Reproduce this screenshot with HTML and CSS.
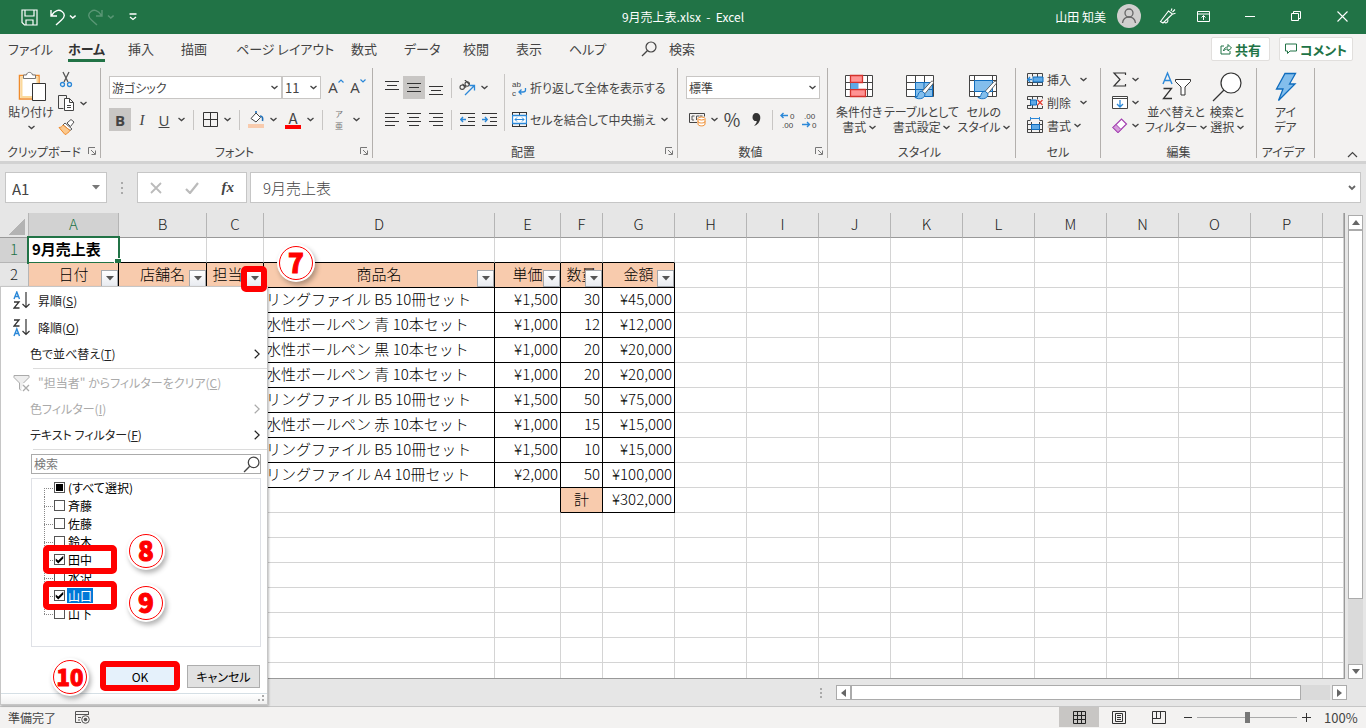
FILE: index.html
```html
<!DOCTYPE html>
<html lang="ja">
<head>
  <meta charset="UTF-8" />
  <meta name="viewport" content="width=device-width, initial-scale=1.0"/>
  <title>9月売上表.xlsx - Excel</title>
  <link rel="stylesheet" href="styles.css">
</head>
<body>

  <!-- shared icons -->
  <svg class="defs" width="0" height="0">
    <symbol id="chev" viewBox="0 0 7 5"><path d="M.5 1l3 2.600 3-2.600" fill="none" stroke="#444" stroke-width="1.300"/></symbol>
    <symbol id="next" viewBox="0 0 6 10"><path d="M.7.7L5.200 5 .7 9.300" fill="none" stroke="currentColor" stroke-width="1.200"/></symbol>
    <symbol id="launch" viewBox="0 0 8 8"><path d="M.5 7V.5H7M3 3l4 4M7.500 3.500v4h-4" fill="none" stroke="#777"/></symbol>
    <symbol id="lens" viewBox="0 0 16 16"><circle cx="10" cy="6" r="5" fill="none" stroke="currentColor" stroke-width="1.200"/><path d="M6.300 9.700L1 15" stroke="currentColor" stroke-width="1.300"/></symbol>
    <symbol id="brush" viewBox="0 0 24 24"><path d="M21.500 2.500c1.200.6 1 1.800.2 2.800L13 16l-3-2.600L19.500 3c.7-.7 1.300-.8 2-.5z" fill="#fff" stroke="#555"/><path d="M2 20c3 .3 3-1.500 3.700-3.600C6.500 14 8.500 13 10 13.400l3 2.600c.3 2-.6 4-3 5-2.600 1-6 .6-8-1z" fill="#83beec" stroke="#0f6cbd"/></symbol>
  </svg>

  <header class="titlebar">
    <div class="quick">
      <button aria-label="上書き保存"><svg width="17" height="17" viewBox="0 0 17 17"><path d="M1 1h15v15H3.500L1 13.500zM4 1v6h9V1M5 16v-5h7v5" fill="none" stroke="#fff" stroke-width="1.200"/></svg></button>
      <button aria-label="元に戻す"><svg width="26" height="17" viewBox="0 0 26 17"><path d="M1 1v6h6M1.500 6.500C5 1 9 .3 12 2.500c3.500 2.600 2.600 6-.5 8.500L6 16" fill="none" stroke="#fff" stroke-width="1.400"/><path d="M20 6.500l2.800 2.500 2.800-2.500" fill="none" stroke="#fff" stroke-width="1.500"/></svg></button>
      <button class="dim" aria-label="やり直し"><svg width="26" height="17" viewBox="0 0 26 17"><path d="M14 1v6H8M13.500 6.500C10 1 6 .3 3 2.500-.5 5 .4 8.500 3.500 11L9 16" fill="none" stroke="#fff" stroke-width="1.400"/><path d="M20 6.500l2.800 2.500 2.800-2.500" fill="none" stroke="#fff" stroke-width="1.500"/></svg></button>
      <button aria-label="カスタマイズ"><svg width="8" height="8" viewBox="0 0 8 8"><path d="M.5 1h7M1 4l3 2.500L7 4" fill="none" stroke="#fff" stroke-width="1.300"/></svg></button>
    </div>
    <div class="doc-title">9月売上表.xlsx&nbsp; -&nbsp; Excel</div>
    <div class="account">
      <span class="user">山田 知美</span>
      <svg width="24" height="24" viewBox="0 0 24 24"><circle cx="12" cy="12" r="12" fill="#d0cfce"/><circle cx="12" cy="9" r="4" fill="none" stroke="#666" stroke-width="1.300"/><path d="M5.500 19c.6-4 3-6 6.500-6s5.900 2 6.500 6" fill="none" stroke="#666" stroke-width="1.300"/></svg>
      <button aria-label="新機能"><svg width="17" height="17" viewBox="0 0 17 17"><path d="M9.500 3l4 3L4 15l-2.500-1.500zM5.500 14c1.500 2 3.500.5 3.500-2.500M12 3l1-2.500M13.500 4l2.500-2.500M14 6l2.500-.7" fill="none" stroke="#fff" stroke-width="1.100"/></svg></button>
      <button aria-label="リボンの表示オプション"><svg width="13" height="11" viewBox="0 0 13 11"><path d="M.5.5h12v10H.500zM.5 3h12M6.500 9V4.500M4.500 6.500l2-2 2 2" fill="none" stroke="#fff"/></svg></button>
      <button aria-label="最小化"><svg width="11" height="11" viewBox="0 0 11 11"><path d="M0 5.500h10" stroke="#fff"/></svg></button>
      <button aria-label="元に戻す(縮小)"><svg width="11" height="11" viewBox="0 0 11 11"><path d="M.5 2.500h7v7h-7zM2.500 2.500v-2h7v7h-2" fill="none" stroke="#fff"/></svg></button>
      <button aria-label="閉じる"><svg width="11" height="11" viewBox="0 0 11 11"><path d="M.5.5l10 10M10.500.5l-10 10" stroke="#fff" stroke-width="1.100"/></svg></button>
    </div>
  </header>

  <nav class="tabs">
    <div class="tab-list">
      <a href="#">ファイル</a>
      <a href="#" class="active">ホーム</a>
      <a href="#">挿入</a>
      <a href="#">描画</a>
      <a href="#">ページ レイアウト</a>
      <a href="#">数式</a>
      <a href="#">データ</a>
      <a href="#">校閲</a>
      <a href="#">表示</a>
      <a href="#">ヘルプ</a>
      <a href="#" class="tell-me"><svg width="16" height="16"><use href="#lens"/></svg>検索</a>
    </div>
    <div class="tab-actions">
      <button><svg width="12" height="12" viewBox="0 0 12 12"><path d="M4 3H1v8h9V8M3.500 8C4 5 6 4 8 4V1.500L11.500 5 8 8V6C6 6 4.500 6.500 3.500 8z" fill="none" stroke="#217346"/></svg>共有</button>
      <button><svg width="12" height="12" viewBox="0 0 12 12"><path d="M.5 1h11v7H5l-2.500 2.500V8h-2z" fill="none" stroke="#217346"/></svg>コメント</button>
    </div>
  </nav>

  <section class="ribbon">
    <div class="group clipboard">
      <div class="group-body">
        <button class="big">
          <svg width="30" height="32" viewBox="0 0 30 32"><path d="M3.500 4.500H23V28H3.500z" fill="#fff" stroke="#ef8b2c" stroke-width="1.500"/><path d="M5.500 6.500h16V26h-16z" fill="none" stroke="#fbd99b" stroke-width="2"/><path d="M7.500 7.500V4h3c.3-3.500 5.500-3.500 6 0h3v3.500z" fill="#fff" stroke="#777"/><path d="M16.500 12.500h13v17h-13z" fill="#fff" stroke="#333"/></svg>
          <span>貼り付け</span>
          <svg width="7" height="5"><use href="#chev"/></svg>
        </button>
        <div class="stack">
          <button aria-label="切り取り"><svg width="16" height="17" viewBox="0 0 16 17"><path d="M5 1l5 10M11 1L6 11" stroke="#555" stroke-width="1.300" fill="none"/><circle cx="4.500" cy="13.500" r="2" fill="none" stroke="#2b88d8" stroke-width="1.300"/><circle cx="11.500" cy="13.500" r="2" fill="none" stroke="#2b88d8" stroke-width="1.300"/></svg></button>
          <button aria-label="コピー"><svg width="17" height="17" viewBox="0 0 17 17"><path d="M5.500 13.500h-5V.5h8v3" fill="none" stroke="#444"/><path d="M6.500 3.500h5l4 4v8h-9zM11.500 3.500v4h4M9 10.500h4M9 12.500h4" fill="#fff" stroke="#444"/></svg><svg width="7" height="5"><use href="#chev"/></svg></button>
          <button aria-label="書式のコピー/貼り付け"><svg width="17" height="16" viewBox="0 0 17 16"><path d="M9 4l4-3.500L16 3l-3.500 4.500z" fill="#fff" stroke="#555"/><path d="M7 4l7 6-2 1.500L5 6z" fill="#fff" stroke="#555"/><path d="M5 6l7 5.500c-1.500 2-3 3.500-5 4L1 8.500C3 8.500 4 7.500 5 6z" fill="#fbc98e" stroke="#ef8b2c"/></svg></button>
        </div>
      </div>
      <div class="group-name"><span>クリップボード</span><svg width="8" height="8"><use href="#launch"/></svg></div>
    </div>

    <div class="group font">
      <div class="group-body rows">
        <div class="row">
          <label class="drop font-name"><select aria-label="フォント"><option>游ゴシック</option></select><svg width="7" height="5"><use href="#chev"/></svg></label>
          <label class="drop font-size"><select aria-label="フォント サイズ"><option>11</option></select><svg width="7" height="5"><use href="#chev"/></svg></label>
          <button class="tool grow">A<svg width="6" height="4" viewBox="0 0 6 4"><path d="M.5 3.500L3 1l2.500 2.500" fill="none" stroke="#2b88d8" stroke-width="1.200"/></svg></button>
          <button class="tool grow">A<svg width="6" height="4" viewBox="0 0 6 4"><path d="M.5.5L3 3 5.500.5" fill="none" stroke="#2b88d8" stroke-width="1.200"/></svg></button>
        </div>
        <div class="row">
          <button class="tool on bold">B</button>
          <button class="tool italic">I</button>
          <button class="tool under">U</button>
          <button class="more" aria-label="下線"><svg width="7" height="5"><use href="#chev"/></svg></button>
          <i class="sep"></i>
          <button class="tool" aria-label="罫線"><svg width="15" height="15" viewBox="0 0 15 15"><path d="M.5.5h14v14H.500zM7.500.5v14M.5 7.500h14" fill="none" stroke="#333"/></svg></button>
          <button class="more" aria-label="罫線の種類"><svg width="7" height="5"><use href="#chev"/></svg></button>
          <i class="sep"></i>
          <button class="tool" aria-label="塗りつぶしの色"><svg width="16" height="17" viewBox="0 0 16 17"><path d="M3 7.500L8 2l4.500 4.500L8 11z" fill="#fff" stroke="#444"/><path d="M8 2V0M12 5c2.500 0 3 2 2.500 5" fill="none" stroke="#1e6fb8" stroke-width="1.600"/><path d="M0 13h16v4H0z" fill="#f8cbad"/></svg></button>
          <button class="more" aria-label="塗りつぶしの種類"><svg width="7" height="5"><use href="#chev"/></svg></button>
          <button class="tool color">A</button>
          <button class="more" aria-label="文字の色"><svg width="7" height="5"><use href="#chev"/></svg></button>
          <i class="sep"></i>
          <button class="tool ruby"><span>ア</span><span>亜</span></button>
          <button class="more" aria-label="ふりがな"><svg width="7" height="5"><use href="#chev"/></svg></button>
        </div>
      </div>
      <div class="group-name"><span>フォント</span><svg width="8" height="8"><use href="#launch"/></svg></div>
    </div>

    <div class="group align">
      <div class="group-body">
        <div class="rows">
          <div class="row">
            <button class="tool" aria-label="上揃え"><svg width="14" height="16" viewBox="0 0 14 16"><path d="M0 1.500h14M2 5.500h10M0 9.500h14" stroke="#333"/></svg></button>
            <button class="tool on" aria-label="上下中央揃え"><svg width="14" height="16" viewBox="0 0 14 16"><path d="M0 3.500h14M2 7.500h10M0 11.500h14" stroke="#333"/></svg></button>
            <button class="tool" aria-label="下揃え"><svg width="14" height="16" viewBox="0 0 14 16"><path d="M0 6.500h14M2 10.500h10M0 14.500h14" stroke="#333"/></svg></button>
            <i class="sep"></i>
            <button class="tool" aria-label="方向"><svg width="17" height="16" viewBox="0 0 17 16"><g fill="none" stroke="#444" stroke-width="1.100"><circle cx="3.200" cy="7.200" r="2.200"/><path d="M3.500 3.800l3.600 3.700M5.500-.5l5 5"/><circle cx="8.200" cy="4" r="2.200"/></g><path d="M6 15l9-9M10.500 5.500H15.500v5" fill="none" stroke="#2b88d8" stroke-width="1.300"/></svg></button>
            <button class="more" aria-label="方向の種類"><svg width="7" height="5"><use href="#chev"/></svg></button>
          </div>
          <div class="row">
            <button class="tool" aria-label="左揃え"><svg width="14" height="14" viewBox="0 0 14 14"><path d="M0 .5h14M0 4.500h10M0 8.500h14M0 12.500h10" stroke="#333"/></svg></button>
            <button class="tool" aria-label="中央揃え"><svg width="14" height="14" viewBox="0 0 14 14"><path d="M0 .5h14M2 4.500h10M0 8.500h14M2 12.500h10" stroke="#333"/></svg></button>
            <button class="tool" aria-label="右揃え"><svg width="14" height="14" viewBox="0 0 14 14"><path d="M0 .5h14M4 4.500h10M0 8.500h14M4 12.500h10" stroke="#333"/></svg></button>
            <i class="sep"></i>
            <button class="tool" aria-label="インデントを減らす"><svg width="15" height="14" viewBox="0 0 15 14"><path d="M0 .5h15M8 4.500h7M8 8.500h7M0 12.500h15" stroke="#333"/><path d="M6 6.500H1M3 4L.8 6.500 3 9" fill="none" stroke="#2b88d8" stroke-width="1.400"/></svg></button>
            <button class="tool" aria-label="インデントを増やす"><svg width="15" height="14" viewBox="0 0 15 14"><path d="M0 .5h15M8 4.500h7M8 8.500h7M0 12.500h15" stroke="#333"/><path d="M0 6.500h5M3 4l2.200 2.500L3 9" fill="none" stroke="#2b88d8" stroke-width="1.400"/></svg></button>
          </div>
        </div>
        <div class="rows wrap-tools">
          <button class="wide"><svg width="15" height="18" viewBox="0 0 15 18"><text x="0" y="8">ab</text><text x="0" y="17">c</text><path d="M13.500 9v2c0 1.500-1 2-2.500 2H7M9.500 10.500L7 13l2.500 2.500" fill="none" stroke="#2b88d8" stroke-width="1.300"/></svg>折り返して全体を表示する</button>
          <button class="wide"><svg width="15" height="15" viewBox="0 0 15 15"><path d="M.5 0v15M14.500 0v15M0 .5h15M0 14.500h15M7.500 0v3M7.500 12v3" stroke="#333"/><path d="M.5 3.500h14v8H.500z" fill="#fff" stroke="#2b88d8" stroke-width="1.300"/><path d="M3 7.500h9M5 5.500l-2 2 2 2M10 5.500l2 2-2 2" fill="none" stroke="#2b88d8"/></svg>セルを結合して中央揃え<svg width="7" height="5"><use href="#chev"/></svg></button>
        </div>
      </div>
      <div class="group-name"><span>配置</span><svg width="8" height="8"><use href="#launch"/></svg></div>
    </div>

    <div class="group number">
      <div class="group-body rows">
        <div class="row">
          <label class="drop format"><select aria-label="表示形式"><option>標準</option></select><svg width="7" height="5"><use href="#chev"/></svg></label>
        </div>
        <div class="row">
          <button class="tool" aria-label="通貨表示形式"><svg width="17" height="15" viewBox="0 0 17 15"><path d="M8 10.500H.5v-9h15v3" fill="none" stroke="#444"/><path d="M5.500 4H3v4h2M10 4H7.500v4M10.500 4h3" fill="none" stroke="#555"/><path d="M9 7v5c0 2.500 7 2.500 7 0V7" fill="#fff" stroke="#ef8b2c"/><ellipse cx="12.500" cy="6.500" rx="3.500" ry="1.500" fill="#fff" stroke="#ef8b2c"/><path d="M9 9.500c0 2 7 2 7 0" fill="none" stroke="#ef8b2c"/></svg></button>
          <button class="more" aria-label="通貨の種類"><svg width="7" height="5"><use href="#chev"/></svg></button>
          <button class="tool percent">%</button>
          <button class="tool percent" aria-label="桁区切りスタイル"><svg width="9" height="13" viewBox="0 0 9 13"><path d="M4 0c3 0 4.500 2 4.300 5C8 9 5.500 12 2 13c2-2 2.800-3.500 2.700-5C2.500 8.500.5 7 .5 4.200.5 2 2 0 4 0z" fill="#333"/></svg></button>
          <i class="sep"></i>
          <button class="tool" aria-label="小数点以下の表示桁数を増やす"><svg width="16" height="18" viewBox="0 0 16 18"><text x="10" y="8">0</text><text x="2" y="17">.00</text><path d="M8 4.500H1M3.500 2L1 4.500 3.500 7" fill="none" stroke="#2b88d8" stroke-width="1.400"/></svg></button>
          <button class="tool" aria-label="小数点以下の表示桁数を減らす"><svg width="16" height="18" viewBox="0 0 16 18"><text x="2" y="8">.00</text><text x="10" y="17">0</text><path d="M0 13.500h7M5 11l2.500 2.500L5 16" fill="none" stroke="#2b88d8" stroke-width="1.400"/></svg></button>
        </div>
      </div>
      <div class="group-name"><span>数値</span><svg width="8" height="8"><use href="#launch"/></svg></div>
    </div>

    <div class="group styles">
      <div class="group-body">
        <button class="big">
          <svg width="30" height="28" viewBox="0 0 30 28"><path d="M1.500 2.500h27v21h-27zM6.500 2.500v21M23.500 2.500v21M1.500 9.500h27M1.500 16.500h27" fill="#fff" stroke="#444"/><path d="M6.500 2.500h12v7h-12zM6.500 16.500h15v7h-15z" fill="#ff9393" stroke="#d3322c" stroke-width="1.300"/><path d="M6.500 10h8v6h-8z" fill="#5ea9e6"/></svg>
          <span>条件付き<br>書式 <svg width="7" height="5"><use href="#chev"/></svg></span>
        </button>
        <button class="big">
          <svg width="32" height="28" viewBox="0 0 32 28"><path d="M1.500 2.500h27v21h-27zM10.500 2.500v21M19.500 2.500v21M1.500 9.500h27M1.500 16.500h27" fill="#fff" stroke="#444"/><path d="M10.500 9.500h17v14h-17z" fill="#83beec" stroke="#0f6cbd"/><path d="M19 9.500v14M10 16.500h18" stroke="#0f6cbd"/><use href="#brush" x="7" y="6" width="24" height="22"/></svg>
          <span>テーブルとして<br>書式設定 <svg width="7" height="5"><use href="#chev"/></svg></span>
        </button>
        <button class="big">
          <svg width="32" height="28" viewBox="0 0 32 28"><path d="M1.500 2.500h27v21h-27zM6.500 2.500v21M24.500 2.500v21M1.500 7.500h27M1.500 18.500h27" fill="#fff" stroke="#444"/><path d="M6.500 7.500h18v11h-18z" fill="#83beec" stroke="#0f6cbd"/><use href="#brush" x="7" y="6" width="24" height="22"/></svg>
          <span>セルの<br>スタイル <svg width="7" height="5"><use href="#chev"/></svg></span>
        </button>
      </div>
      <div class="group-name"><span>スタイル</span></div>
    </div>

    <div class="group cells">
      <div class="group-body lines">
        <button class="line"><svg width="17" height="15" viewBox="0 0 17 15"><path d="M.5 1.500h15v12H.500zM5.500 1.500v3M10.500 1.500v12M5.500 10v3.500M.5 10.500h15" fill="none" stroke="#444"/><path d="M6 5h10v5H6z" fill="#5ea9e6" stroke="#0f6cbd"/><path d="M0 7.500h5M3 5L.8 7.500 3 10" fill="none" stroke="#2b88d8" stroke-width="1.300"/></svg><span>挿入</span><svg width="7" height="5"><use href="#chev"/></svg></button>
        <button class="line"><svg width="17" height="15" viewBox="0 0 17 15"><path d="M.5 1.500h15M.5 13.500h15M.5 1.500v3M.5 10v3.500M5.500 1.500v3M5.500 10v3.500M10.500 1.500v3M10.500 10v3.500M15.500 1.500v2M15.500 11v2.500M0 4.500h4M0 10.500h4" fill="none" stroke="#444"/><path d="M3.500 5h6v5h-6z" fill="#5ea9e6" stroke="#0f6cbd"/><path d="M10.500 5l5 5M15.500 5l-5 5" stroke="#e03c31" stroke-width="1.300"/></svg><span>削除</span><svg width="7" height="5"><use href="#chev"/></svg></button>
        <button class="line short"><svg width="17" height="17" viewBox="0 0 17 17"><path d="M.5 3.500h3M12.500 3.500h3M.5 3.500v12h15v-12M4.500 5v10M12.500 5v10M.5 12.500h15M.5 7.500h15" fill="none" stroke="#444"/><path d="M4.500 7.500h8v5h-8z" fill="#5ea9e6" stroke="#0f6cbd"/><path d="M3.500 1.500h9M3.500 0v3M12.500 0v3" stroke="#2b88d8"/></svg><span>書式</span><svg width="7" height="5"><use href="#chev"/></svg></button>
      </div>
      <div class="group-name"><span>セル</span></div>
    </div>

    <div class="group edit">
      <div class="group-body">
        <div class="lines">
          <button class="line" aria-label="合計"><svg width="16" height="15" viewBox="0 0 16 15"><path d="M13.500 3V1H2l6 6.500L2 14h11.500v-2" fill="none" stroke="#333" stroke-width="1.200"/></svg><svg width="7" height="5"><use href="#chev"/></svg></button>
          <button class="line" aria-label="フィル"><svg width="16" height="15" viewBox="0 0 16 15"><path d="M.5 1.500h15v12H.500zM.5 3.500h15" fill="#fff" stroke="#444"/><path d="M8 5v7M5 9l3 3 3-3" fill="none" stroke="#2b88d8" stroke-width="1.300"/></svg><svg width="7" height="5"><use href="#chev"/></svg></button>
          <button class="line" aria-label="クリア"><svg width="16" height="15" viewBox="0 0 16 15"><path d="M1 9.500L9.500 1l5 5L6 14.500z" fill="#fff" stroke="#a33fb0" stroke-width="1.200"/><path d="M1 9.500L4 6.500l5 5-3 3z" fill="#d59ddb" stroke="#a33fb0"/></svg><svg width="7" height="5"><use href="#chev"/></svg></button>
        </div>
        <button class="big">
          <svg width="30" height="30" viewBox="0 0 30 30"><path d="M2 12L6.500 1 11 12M3.500 8.500h6" fill="none" stroke="#2b88d8" stroke-width="1.400"/><path d="M2.500 16.500h8l-8 10h8.500" fill="none" stroke="#333" stroke-width="1.300"/><path d="M14.500 7.500h15v2L24 15v8h-4v-8l-5.500-5.500z" fill="#fff" stroke="#333"/></svg>
          <span>並べ替えと<br>フィルター <svg width="7" height="5"><use href="#chev"/></svg></span>
        </button>
        <button class="big find">
          <svg width="30" height="30" viewBox="0 0 30 30"><circle cx="19" cy="11" r="10" fill="#fff" stroke="#333" stroke-width="1.200"/><path d="M12 18L1 29" stroke="#333" stroke-width="1.300"/></svg>
          <span>検索と<br>選択 <svg width="7" height="5"><use href="#chev"/></svg></span>
        </button>
      </div>
      <div class="group-name"><span>編集</span></div>
    </div>

    <div class="group ideas">
      <div class="group-body">
        <button class="big">
          <svg width="24" height="30" viewBox="0 0 24 30"><path d="M11 1.500h10.500L15.500 12H21L4.500 28.500 9 17H2.500z" fill="#83beec" stroke="#0f6cbd" stroke-width="1.300"/></svg>
          <span>アイ<br>デア</span>
        </button>
      </div>
      <div class="group-name"><span>アイデア</span></div>
    </div>

    <button class="collapse" aria-label="リボンを折りたたむ"><svg width="11" height="7" viewBox="0 0 11 7"><path d="M1 6l4.500-4.500L10 6" fill="none" stroke="#444" stroke-width="1.200"/></svg></button>
  </section>

  <section class="formula-bar">
    <div class="name-box"><input type="text" value="A1" aria-label="名前ボックス"><svg width="8" height="5" viewBox="0 0 8 5"><path d="M0 0h8L4 4.500z" fill="#777"/></svg></div>
    <svg class="dots" width="2" height="12" viewBox="0 0 2 12"><path d="M0 0h2v2H0zM0 5h2v2H0zM0 10h2v2H0z" fill="#aaa"/></svg>
    <div class="fx">
      <button aria-label="キャンセル"><svg width="12" height="12" viewBox="0 0 12 12"><path d="M1 1l10 10M11 1L1 11" stroke="#bbb" stroke-width="1.800"/></svg></button>
      <button aria-label="入力"><svg width="14" height="12" viewBox="0 0 14 12"><path d="M1 7l4 4 8-10" fill="none" stroke="#bbb" stroke-width="2.200"/></svg></button>
      <button class="fx-label">fx</button>
    </div>
    <div class="formula"><input type="text" value="9月売上表" aria-label="数式バー"><svg width="8" height="6" viewBox="0 0 8 6"><path d="M1 1l3 3 3-3" fill="none" stroke="#666" stroke-width="1.800"/></svg></div>
  </section>

  <main class="workspace">
    <div class="sheet">
      <div class="grid-wrap">
        <table class="grid">
          <colgroup>
            <col class="w-head"><col class="w-a"><col class="w-b"><col class="w-c"><col class="w-d"><col class="w-e"><col class="w-f"><col class="w-g">
            <col class="w-std"><col class="w-std"><col class="w-std"><col class="w-std"><col class="w-std"><col class="w-std"><col class="w-std"><col class="w-std"><col class="w-std"><col>
          </colgroup>
          <thead>
            <tr id="letters"><th class="corner"></th></tr>
          </thead>
          <tbody id="cells"></tbody>
        </table>
      </div>
      <div class="vscroll">
        <button aria-label="上へ"><svg width="8" height="5" viewBox="0 0 8 5"><path d="M0 5h8L4 0z" fill="#666"/></svg></button>
        <div class="track"><div class="thumb"></div></div>
        <button aria-label="下へ"><svg width="8" height="5" viewBox="0 0 8 5"><path d="M0 0h8L4 5z" fill="#666"/></svg></button>
      </div>
    </div>
    <div class="hscroll">
      <svg width="2" height="10" viewBox="0 0 2 10"><path d="M0 0h2v2H0zM0 4h2v2H0zM0 8h2v2H0z" fill="#aaa"/></svg>
      <div class="hbar">
        <button aria-label="左へ"><svg width="5" height="8" viewBox="0 0 5 8"><path d="M5 0v8L0 4z" fill="#666"/></svg></button>
        <div class="track"><div class="thumb"></div></div>
        <button aria-label="右へ"><svg width="5" height="8" viewBox="0 0 5 8"><path d="M0 0v8l5-4z" fill="#666"/></svg></button>
      </div>
    </div>

    <div class="filter-menu">
      <button class="item tall"><svg width="17" height="19" viewBox="0 0 17 19"><path d="M1 8l2.800-7L6.500 8M2 5.500h3.500" fill="none" stroke="#2b88d8" stroke-width="1.400"/><path d="M1 11h5l-5 6h5.500" fill="none" stroke="#333" stroke-width="1.300"/><path d="M13 1v15M9.500 13l3.500 3.500 3.500-3.500" fill="none" stroke="#333" stroke-width="1.200"/></svg><span>昇順(<u>S</u>)</span></button>
      <button class="item tall"><svg width="17" height="19" viewBox="0 0 17 19"><path d="M1 2h5L1 8h5.500" fill="none" stroke="#333" stroke-width="1.300"/><path d="M1 18l2.800-7 2.700 7M2 15.500h3.500" fill="none" stroke="#2b88d8" stroke-width="1.400"/><path d="M13 1v15M9.500 13l3.500 3.500 3.500-3.500" fill="none" stroke="#333" stroke-width="1.200"/></svg><span>降順(<u>O</u>)</span></button>
      <button class="item sub"><span>色で並べ替え(<u>T</u>)</span><svg width="6" height="10"><use href="#next"/></svg></button>
      <hr>
      <button class="item" disabled><svg width="17" height="17" viewBox="0 0 17 17"><path d="M8 15.500L6.500 14V8L1 2.500v-2h15v2L10.500 8" fill="#eee" stroke="#aaa"/><path d="M10 10l6 6M16 10l-6 6" stroke="#aaa" stroke-width="1.300"/></svg><span>"担当者" からフィルターをクリア(<u>C</u>)</span></button>
      <button class="item sub" disabled><span>色フィルター(<u>I</u>)</span><svg width="6" height="10"><use href="#next"/></svg></button>
      <button class="item sub"><span>テキスト フィルター(<u>F</u>)</span><svg width="6" height="10"><use href="#next"/></svg></button>
      <hr>
      <label class="search"><input type="text" placeholder="検索" aria-label="検索"><svg width="17" height="17"><use href="#lens"/></svg></label>
      <ul class="tree">
        <li><label><input type="checkbox" id="all">(すべて選択)</label></li>
        <li><label><input type="checkbox">斉藤</label></li>
        <li><label><input type="checkbox">佐藤</label></li>
        <li><label><input type="checkbox">鈴木</label></li>
        <li><label><input type="checkbox" checked>田中</label></li>
        <li><label><input type="checkbox">水沢</label></li>
        <li><label><input type="checkbox" checked><span class="focus">山口</span></label></li>
        <li><label><input type="checkbox">山下</label></li>
      </ul>
      <div class="buttons">
        <button class="ok">OK</button>
        <button>キャンセル</button>
      </div>
      <div class="grip"><svg width="7" height="7" viewBox="0 0 7 7"><path d="M4 0h2v2H4zM4 4h2v2H4zM0 4h2v2H0z" fill="#aaa"/></svg></div>
    </div>

    <!-- step marks -->
    <div class="mark mark-filter"></div>
    <div class="mark mark-tanaka"></div>
    <div class="mark mark-yamaguchi"></div>
    <div class="mark mark-ok"></div>
    <div class="step step-7">7</div>
    <div class="step step-8">8</div>
    <div class="step step-9">9</div>
    <div class="step step-10">10</div>
  </main>

  <footer class="statusbar">
    <span>準備完了</span>
    <svg width="15" height="13" viewBox="0 0 15 13"><path d="M6 11.500H.5V.5h13V4M.5 3.500h13M3 6.500h3M3 9h2" fill="none" stroke="#555"/><circle cx="10.500" cy="8.500" r="3.800" fill="#f3f2f1" stroke="#555"/><circle cx="10.500" cy="8.500" r="1.800" fill="#555"/></svg>
    <div class="views">
      <button class="on" aria-label="標準"><svg width="13" height="13" viewBox="0 0 13 13"><path d="M.5.5h12v12H.500zM4.500.5v12M8.500.5v12M.5 4.500h12M.5 8.500h12" fill="none" stroke="#222"/></svg></button>
      <button aria-label="ページ レイアウト"><svg width="14" height="13" viewBox="0 0 14 13"><path d="M.5.5h13v12H.500zM3.500 2.500h7v8h-7zM5 4.500h4M5 6.500h4M5 8.500h4" fill="none" stroke="#333"/></svg></button>
      <button aria-label="改ページ プレビュー"><svg width="14" height="13" viewBox="0 0 14 13"><path d="M.5.5h13v12H.500zM4.500.5v7M8.500.5v7M.5 7.500h8" fill="none" stroke="#333"/></svg></button>
    </div>
    <div class="zoom">
      <button aria-label="縮小"><svg width="9" height="9" viewBox="0 0 9 9"><path d="M0 4.500h8" stroke="#333"/></svg></button>
      <input type="range" min="0" max="100" value="50" aria-label="ズーム">
      <button aria-label="拡大"><svg width="9" height="9" viewBox="0 0 9 9"><path d="M0 4.500h9M4.500 0v9" stroke="#333"/></svg></button>
      <span>100%</span>
    </div>
  </footer>

  <script>
    const letters = 'ABCDEFGHIJKLMNOP'.split('');
    const headers = ['日付', '店舗名', '担当者', '商品名', '単価', '数量', '金額'];
    const items = [
      ['リングファイル B5 10冊セット', '¥1,500', '30', '¥45,000'],
      ['水性ボールペン 青 10本セット', '¥1,000', '12', '¥12,000'],
      ['水性ボールペン 黒 10本セット', '¥1,000', '20', '¥20,000'],
      ['水性ボールペン 青 10本セット', '¥1,000', '20', '¥20,000'],
      ['リングファイル B5 10冊セット', '¥1,500', '50', '¥75,000'],
      ['水性ボールペン 赤 10本セット', '¥1,000', '15', '¥15,000'],
      ['リングファイル B5 10冊セット', '¥1,500', '10', '¥15,000'],
      ['リングファイル A4 10冊セット', '¥2,000', '50', '¥100,000']
    ];
    const arrow = '<svg width="8" height="5" viewBox="0 0 8 5"><path d="M0 0h8L4 4.500z" fill="#555"/></svg>';

    const letterRow = document.getElementById('letters');
    letters.concat('').forEach(function(letter, i) {
      const th = document.createElement('th');
      th.textContent = letter;
      if (i === 0) th.className = 'current';
      letterRow.appendChild(th);
    });

    const body = document.getElementById('cells');
    for (let r = 1; r <= 18; r++) {
      const tr = document.createElement('tr');
      const th = document.createElement('th');
      if (r <= 2) th.textContent = r;
      if (r === 1) th.className = 'current';
      tr.appendChild(th);

      for (let c = 0; c <= letters.length; c++) {
        const td = document.createElement('td');
        if (r === 1 && c < 7) td.classList.add('above-table');
        if (r === 1 && c === 0) {
          td.textContent = '9月売上表';
          td.classList.add('selected');
        }
        if (r === 2 && c < 7) {
          td.className = 'boxed heading';
          td.innerHTML = headers[c] + '<button class="filter-btn" aria-label="フィルター">' + arrow + '</button>';
        }
        if (r >= 3 && r <= 10 && c < 7) {
          td.className = 'boxed';
          if (c >= 3) td.textContent = items[r - 3][c - 3];
          if (c >= 4) td.classList.add('num');
        }
        if (r === 11 && c === 4) td.classList.add('before-total');
        if (r === 11 && c === 5) {
          td.className = 'boxed heading';
          td.textContent = '計';
        }
        if (r === 11 && c === 6) {
          td.className = 'boxed num';
          td.textContent = '¥302,000';
        }
        tr.appendChild(td);
      }
      body.appendChild(tr);
    }

    document.getElementById('all').indeterminate = true;
  </script>
</body>
</html>
```
FILE: styles.css
```css
* {
  box-sizing: border-box;
}

body {
  margin: 0;
  height: 100vh;
  display: flex;
  flex-direction: column;
  overflow: hidden;
  background: #e6e6e6;
  color: #333;
  font-family: "Noto Sans CJK JP", sans-serif;
  font-size: 12px;
  line-height: 15px;
  font-feature-settings: "palt";
}

button,
input,
select {
  font: inherit;
  font-feature-settings: inherit;
  color: inherit;
  margin: 0;
  padding: 0;
  border: none;
  background: none;
  border-radius: 0;
  outline: none;
}

svg {
  flex: none;
  display: block;
}

svg text {
  font-family: "Liberation Sans", sans-serif;
  font-size: 8px;
  fill: #444;
}

.defs {
  position: absolute;
}

/* Title bar */
.titlebar {
  flex: none;
  height: 34px;
  display: grid;
  grid-template-columns: 1fr auto 1fr;
  align-items: center;
  padding-bottom: 2px;
  background: #217346;
  color: #fff;
}

.quick {
  display: flex;
  align-items: center;
  gap: 12px;
  padding: 2px 0 0 21px;
}

.quick button:last-child {
  margin-left: 3px;
}

.dim {
  opacity: 0.25;
}

.account {
  display: flex;
  align-items: center;
  justify-content: flex-end;
  padding-right: 18px;
}

.account > svg {
  margin: 0 18px 0 11px;
}

.account button {
  margin-right: 35px;
}

.account button:nth-of-type(1) {
  margin-right: 21px;
}

.account button:last-child {
  margin-right: 0;
}

/* Tabs */
.tabs {
  flex: none;
  height: 32px;
  display: flex;
  justify-content: space-between;
  background: #f3f2f1;
  font-size: 13px;
}

.tab-list {
  display: grid;
  grid-template-columns: 60px 60px 53px 55px 115px 53px 59px 53px 53px 72px 60px;
  padding-left: 8px;
}

.tab-list a {
  justify-self: start;
  height: 28px;
  padding-top: 7px;
  color: #444;
  text-decoration: none;
  white-space: nowrap;
}

.tab-list .active {
  font-weight: bold;
  color: #333;
  border-bottom: 3px solid #217346;
}

.tab-list .tell-me {
  display: flex;
  gap: 12px;
}

.tab-actions {
  display: flex;
  gap: 9px;
  padding: 3px 13px 0 0;
}

.tab-actions button {
  display: flex;
  align-items: center;
  justify-content: center;
  gap: 3px;
  min-width: 59px;
  height: 24px;
  padding: 0 5px;
  background: #fff;
  border: 1px solid #e1dfdd;
  border-radius: 2px;
  color: #217346;
  font-weight: bold;
}

/* Ribbon */
.ribbon {
  flex: none;
  height: 98px;
  display: flex;
  padding-bottom: 3px;
  background: #f3f2f1;
  border-bottom: 3px solid #d2d2d2;
  color: #444;
}

.group {
  flex: none;
  display: flex;
  flex-direction: column;
  justify-content: space-between;
  margin: 2px 0 0;
  border-right: 1px solid #b3b0ad;
}

.clipboard { width: 101px; }
.font { width: 272px; padding-left: 8px; }
.align { width: 305px; padding-left: 8px; }
.number { width: 150px; padding-left: 8px; }
.styles { width: 188px; }
.cells { width: 85px; padding-left: 11px; }
.edit { width: 156px; padding-left: 11px; }
.ideas { width: 58px; }

.group-body {
  display: flex;
}

.group-name {
  display: flex;
  align-items: center;
  height: 16px;
  padding: 2px 4px 0 0;
}

.group-name span {
  flex: 1;
  text-align: center;
  white-space: nowrap;
}

.cells .group-name,
.edit .group-name {
  padding-right: 11px;
}

.big {
  flex: 1;
  display: flex;
  flex-direction: column;
  align-items: center;
  min-width: 0;
  padding-top: 3px;
  white-space: nowrap;
}

.big > svg:first-child {
  height: 32px;
}

.big span {
  padding-top: 1px;
}

.big span svg {
  display: inline-block;
  vertical-align: 2px;
}

.clipboard .big {
  flex: none;
  width: 62px;
}

.clipboard .big > svg:last-child {
  margin-top: 6px;
}

.stack {
  display: flex;
  flex-direction: column;
  gap: 7px;
  padding-top: 3px;
  margin-left: -4px;
}

.stack button {
  display: flex;
  align-items: center;
  gap: 5px;
}

.rows {
  display: flex;
  flex-direction: column;
  gap: 9px;
  padding-top: 8px;
}

.row {
  display: flex;
  align-items: center;
  height: 23px;
}

.tool {
  flex: none;
  width: 22px;
  height: 23px;
  display: flex;
  align-items: center;
  justify-content: center;
  font-size: 15px;
}

.tool.on {
  background: #c8c6c4;
}

.more {
  width: 12px;
  height: 23px;
  display: flex;
  align-items: center;
  justify-content: center;
}

.sep {
  width: 12px;
  height: 20px;
  background: linear-gradient(#c8c6c4, #c8c6c4) center / 1px 100% no-repeat;
}

.align .sep,
.number .sep {
  width: 9px;
}

.drop {
  display: grid;
  align-items: center;
  height: 23px;
  background: #fff;
  border: 1px solid #c8c6c4;
}

.drop select,
.drop svg {
  grid-area: 1 / 1;
}

.drop select {
  appearance: none;
  width: 100%;
  padding-left: 2px;
}

.drop svg {
  justify-self: end;
  margin-right: 3px;
  pointer-events: none;
}

.font-name {
  width: 173px;
}

.font-size {
  width: 39px;
  margin-right: 4px;
}

.font-size select {
  font-size: 13px;
}

.format {
  width: 134px;
}

.grow {
  align-items: flex-start;
}

.grow svg {
  margin-top: 3px;
}

.grow,
.bold,
.italic,
.under {
  font-family: "Open Sans", sans-serif;
  font-size: 15px;
  line-height: 22px;
}

.bold {
  font-weight: bold;
}

.italic {
  font-family: "Liberation Serif", serif;
  font-style: italic;
}

.under {
  text-decoration: underline;
}

.color {
  height: 18px;
  margin-left: 3px;
  line-height: 14px;
  background: linear-gradient(#f00, #f00) center bottom / 16px 4px no-repeat;
  align-items: flex-start;
}

.ruby {
  flex-direction: column;
  font-size: 8px;
  line-height: 12px;
  color: #777;
}

.percent {
  width: 24px;
  font-size: 18px;
}

.wrap-tools {
  margin: 6px 0 0 4px;
  padding: 2px 0 0 7px;
  border-left: 1px solid #c8c6c4;
}

.wide {
  display: flex;
  align-items: center;
  gap: 3px;
  height: 23px;
  white-space: nowrap;
}

.wide svg:last-child:not(:first-child) {
  margin-left: 3px;
}

.lines {
  display: flex;
  flex-direction: column;
}

.line {
  display: flex;
  align-items: center;
  gap: 3px;
  height: 23px;
}

.cells .line svg:last-child {
  margin-left: 6px;
}

.cells .short svg:last-child {
  margin-left: 0;
}

.edit .line svg:last-child {
  margin-left: 1px;
}

.edit .big {
  flex: none;
  width: 66px;
  margin-left: 4px;
}

.edit .find {
  width: 44px;
  margin-left: -4px;
}

.collapse {
  align-self: flex-end;
  margin: 0 8px 0 auto;
}

/* Formula bar */
.formula-bar {
  flex: none;
  display: flex;
  align-items: center;
  height: 49px;
  padding: 0 5px 2px;
  color: #444;
}

.name-box,
.fx,
.formula {
  display: flex;
  align-items: center;
  height: 31px;
  background: #fff;
  border: 1px solid #c6c6c6;
}

.name-box {
  width: 102px;
  padding: 0 6px;
}

.name-box input {
  flex: 1;
  min-width: 0;
  padding-top: 2px;
  font-size: 15px;
}

.dots {
  margin: 0 14px;
}

.fx {
  width: 110px;
  justify-content: space-between;
  padding: 0 12px;
  margin-right: 3px;
}

.fx-label {
  font-family: "Liberation Serif", serif;
  font-style: italic;
  font-weight: bold;
  font-size: 15px;
}

.formula {
  flex: 1;
  padding: 0 4px 0 12px;
}

.formula input {
  flex: 1;
  font-size: 15px;
  font-weight: 300;
  font-feature-settings: normal;
}

/* Sheet */
.workspace {
  flex: 1;
  min-height: 0;
  position: relative;
  display: flex;
  flex-direction: column;
}

.sheet {
  flex: 1;
  min-height: 0;
  display: flex;
}

.grid-wrap {
  flex: 1;
  min-width: 0;
  overflow: hidden;
  border-right: 1px solid #999;
  border-bottom: 1px solid #999;
}

.grid {
  width: 100%;
  table-layout: fixed;
  border-collapse: separate;
  border-spacing: 0;
  background: #fff;
  color: #000;
  font-size: 15px;
  font-weight: 300;
  font-feature-settings: normal;
}

.w-head { width: 29px; }
.w-a { width: 90px; }
.w-b { width: 88px; }
.w-c { width: 57px; }
.w-d { width: 231px; }
.w-e { width: 66px; }
.w-f { width: 42px; }
.w-g,
.w-std { width: 72px; }

.grid th,
.grid td {
  height: 25px;
  padding: 0 2px 2px;
  line-height: 20px;
  white-space: nowrap;
  border-right: 1px solid #d4d4d4;
  border-bottom: 1px solid #d4d4d4;
}

.grid th {
  background: #e6e6e6;
  font-weight: 300;
  color: #222;
  border-color: #b5b5b5;
}

.grid thead th {
  border-bottom-color: #999;
}

.grid .current {
  background: #d2d2d2;
  color: #217346;
}

.grid .corner {
  background: linear-gradient(135deg, #e6e6e6 50%, #b3b3b3 50%) 8px 5px / 17px 17px no-repeat #e6e6e6;
}

.grid td.above-table {
  border-bottom-color: #000;
}

.grid td.boxed {
  border-color: #000;
}

.grid td.before-total {
  border-right-color: #000;
}

.grid td.heading {
  position: relative;
  background: #f8cbad;
  text-align: center;
}

.grid td.num {
  text-align: right;
}

.grid td.selected {
  position: relative;
  padding-left: 3px;
  font-weight: bold;
}

.selected::before {
  content: "";
  position: absolute;
  inset: -2px;
  border: 2px solid #217346;
}

.selected::after {
  content: "";
  position: absolute;
  right: -3px;
  bottom: -3px;
  width: 6px;
  height: 6px;
  background: #217346;
  border: 1px solid #fff;
  border-width: 1px 0 0 1px;
}

.filter-btn {
  position: absolute;
  right: 0;
  bottom: 0;
  width: 17px;
  height: 17px;
  display: flex;
  align-items: center;
  justify-content: center;
  background: linear-gradient(#fff, #e8ebf0);
  border: 1px solid #a6a9ad;
}

.track {
  flex: 1;
  display: flex;
  background: #dadada;
}

.thumb {
  background: #fff;
  border: 1px solid #ababab;
}

.vscroll {
  flex: none;
  width: 21px;
  display: flex;
  flex-direction: column;
  padding: 2px 3px 0;
}

.vscroll button,
.hbar button {
  flex: none;
  width: 15px;
  height: 15px;
  display: flex;
  align-items: center;
  justify-content: center;
  background: #fff;
  border: 1px solid #ababab;
}

.vscroll .thumb {
  width: 100%;
  height: 85%;
}

.hscroll {
  flex: none;
  height: 27px;
  display: flex;
  align-items: center;
  justify-content: flex-end;
  gap: 14px;
  padding: 0 19px 0 0;
}

.hbar {
  width: 511px;
  display: flex;
}

.hbar .track {
  margin-right: 2px;
}

.hbar .thumb {
  width: 94%;
}

/* Filter menu */
.filter-menu {
  position: absolute;
  left: 0;
  top: 73px;
  width: 268px;
  display: flex;
  flex-direction: column;
  background: #fff;
  border: 1px solid #c6c6c6;
  box-shadow: 1px 1px 2px rgba(0, 0, 0, 0.25);
  color: #222;
}

.item {
  display: flex;
  align-items: center;
  gap: 8px;
  height: 26px;
  padding-left: 12px;
  text-align: left;
  white-space: nowrap;
}

.item.tall {
  height: 27px;
}

.item.sub {
  justify-content: space-between;
  padding: 0 7px 0 29px;
}

.item span {
  padding-bottom: 1px;
}

.item:disabled {
  color: #aaa;
}

.filter-menu hr {
  width: 234px;
  height: 1px;
  margin: 1px 0 1px auto;
  border: none;
  background: #dcdcdc;
}

.search {
  display: flex;
  align-items: center;
  height: 20px;
  margin: 3px 6px 0 30px;
  border: 1px solid #ababab;
  color: #444;
}

.search input {
  flex: 1;
  min-width: 0;
  padding: 0 0 2px 2px;
}

.search input::placeholder {
  color: #777;
}

.tree {
  list-style: none;
  height: 169px;
  margin: 4px 6px 0 30px;
  padding: 0 0 0 12px;
  border: 1px solid #dfe1e6;
}

.tree li {
  display: flex;
  height: 18px;
}

/* dotted branch lines */
.tree li::before {
  content: "";
  width: 10px;
  background:
    repeating-linear-gradient(90deg, #888 0 1px, transparent 1px 2px) 0 9px / 10px 1px no-repeat,
    repeating-linear-gradient(#888 0 1px, transparent 1px 2px) 0 0 / 1px 100% no-repeat;
}

.tree li:first-child::before {
  background-position: 0 9px, 0 9px;
}

.tree li:last-child::before {
  background-size: 10px 1px, 1px 9px;
}

.tree label {
  display: flex;
  align-items: center;
  gap: 3px;
  height: 17px;
  color: #000;
}

.tree input {
  appearance: none;
  width: 11px;
  height: 11px;
  display: grid;
  place-content: center;
  background: #fff;
  border: 1px solid #555;
}

.tree input:indeterminate::before {
  content: "";
  width: 7px;
  height: 7px;
  background: #000;
}

.tree input:checked::before {
  content: "";
  width: 9px;
  height: 9px;
  background: #000;
  clip-path: polygon(8% 40%, 36% 62%, 92% 8%, 92% 38%, 36% 94%, 8% 68%);
}

.focus {
  margin-left: -1px;
  padding: 0 1px;
  background: #0078d7;
  color: #fff;
}

.buttons {
  display: flex;
  justify-content: flex-end;
  gap: 9px;
  margin: 18px 7px 0 0;
}

.buttons button {
  width: 73px;
  height: 23px;
  background: #e1e1e1;
  border: 1px solid #adadad;
  color: #000;
}

.buttons .ok {
  width: 76px;
  background: #e5f1fb;
  border-color: #0078d7;
}

.grip {
  display: flex;
  align-items: flex-end;
  justify-content: flex-end;
  height: 11px;
  margin-top: 5px;
  padding: 0 2px 2px 0;
  border-top: 1px solid #d5dfe5;
  background: linear-gradient(#fff, #f0f0f0);
}

/* Step marks */
.mark {
  position: absolute;
  border: 6px solid #f00;
  border-radius: 5px;
}

.mark-filter { left: 241px; top: 53px; width: 26px; height: 26px; }
.mark-tanaka { left: 43px; top: 332px; width: 74px; height: 29px; }
.mark-yamaguchi { left: 43px; top: 368px; width: 74px; height: 29px; }
.mark-ok { left: 100px; top: 448px; width: 80px; height: 30px; }

.step {
  position: absolute;
  width: 34px;
  height: 34px;
  border: 1px solid #f00;
  border-radius: 50%;
  background: #fff;
  box-shadow: 0 0 0 2px #fff, 2px 3px 5px 2px rgba(0, 0, 0, 0.3);
  color: #f00;
  font-size: 26px;
  font-weight: 900;
  line-height: 30px;
  text-align: center;
  -webkit-text-stroke: 1px #f00;
}

.step-7 { left: 279px; top: 33px; }
.step-8 { left: 129px; top: 321px; }
.step-9 { left: 129px; top: 373px; }
.step-10 { left: 53px; top: 447px; font-size: 22px; }

/* Status bar */
.statusbar {
  flex: none;
  height: 22px;
  display: flex;
  align-items: center;
  gap: 19px;
  padding: 0 8px 1px;
  background: #f3f2f1;
  border-top: 1px solid #c6c6c6;
  color: #444;
}

.views {
  display: flex;
  align-self: stretch;
  margin-left: auto;
}

.views button {
  width: 40px;
  display: flex;
  align-items: center;
  justify-content: center;
}

.views .on {
  background: #c8c6c4;
}

.zoom {
  display: flex;
  align-items: center;
  margin-left: -14px;
}

.zoom span {
  width: 34px;
  margin-left: 13px;
  font-size: 13px;
}

.zoom input {
  appearance: none;
  width: 100px;
  height: 11px;
  margin: 0 5px 0 4px;
  background: linear-gradient(#aaa, #aaa) center / 100% 1px no-repeat;
}

.zoom input::-webkit-slider-thumb {
  appearance: none;
  width: 5px;
  height: 11px;
  background: #777;
}
```
